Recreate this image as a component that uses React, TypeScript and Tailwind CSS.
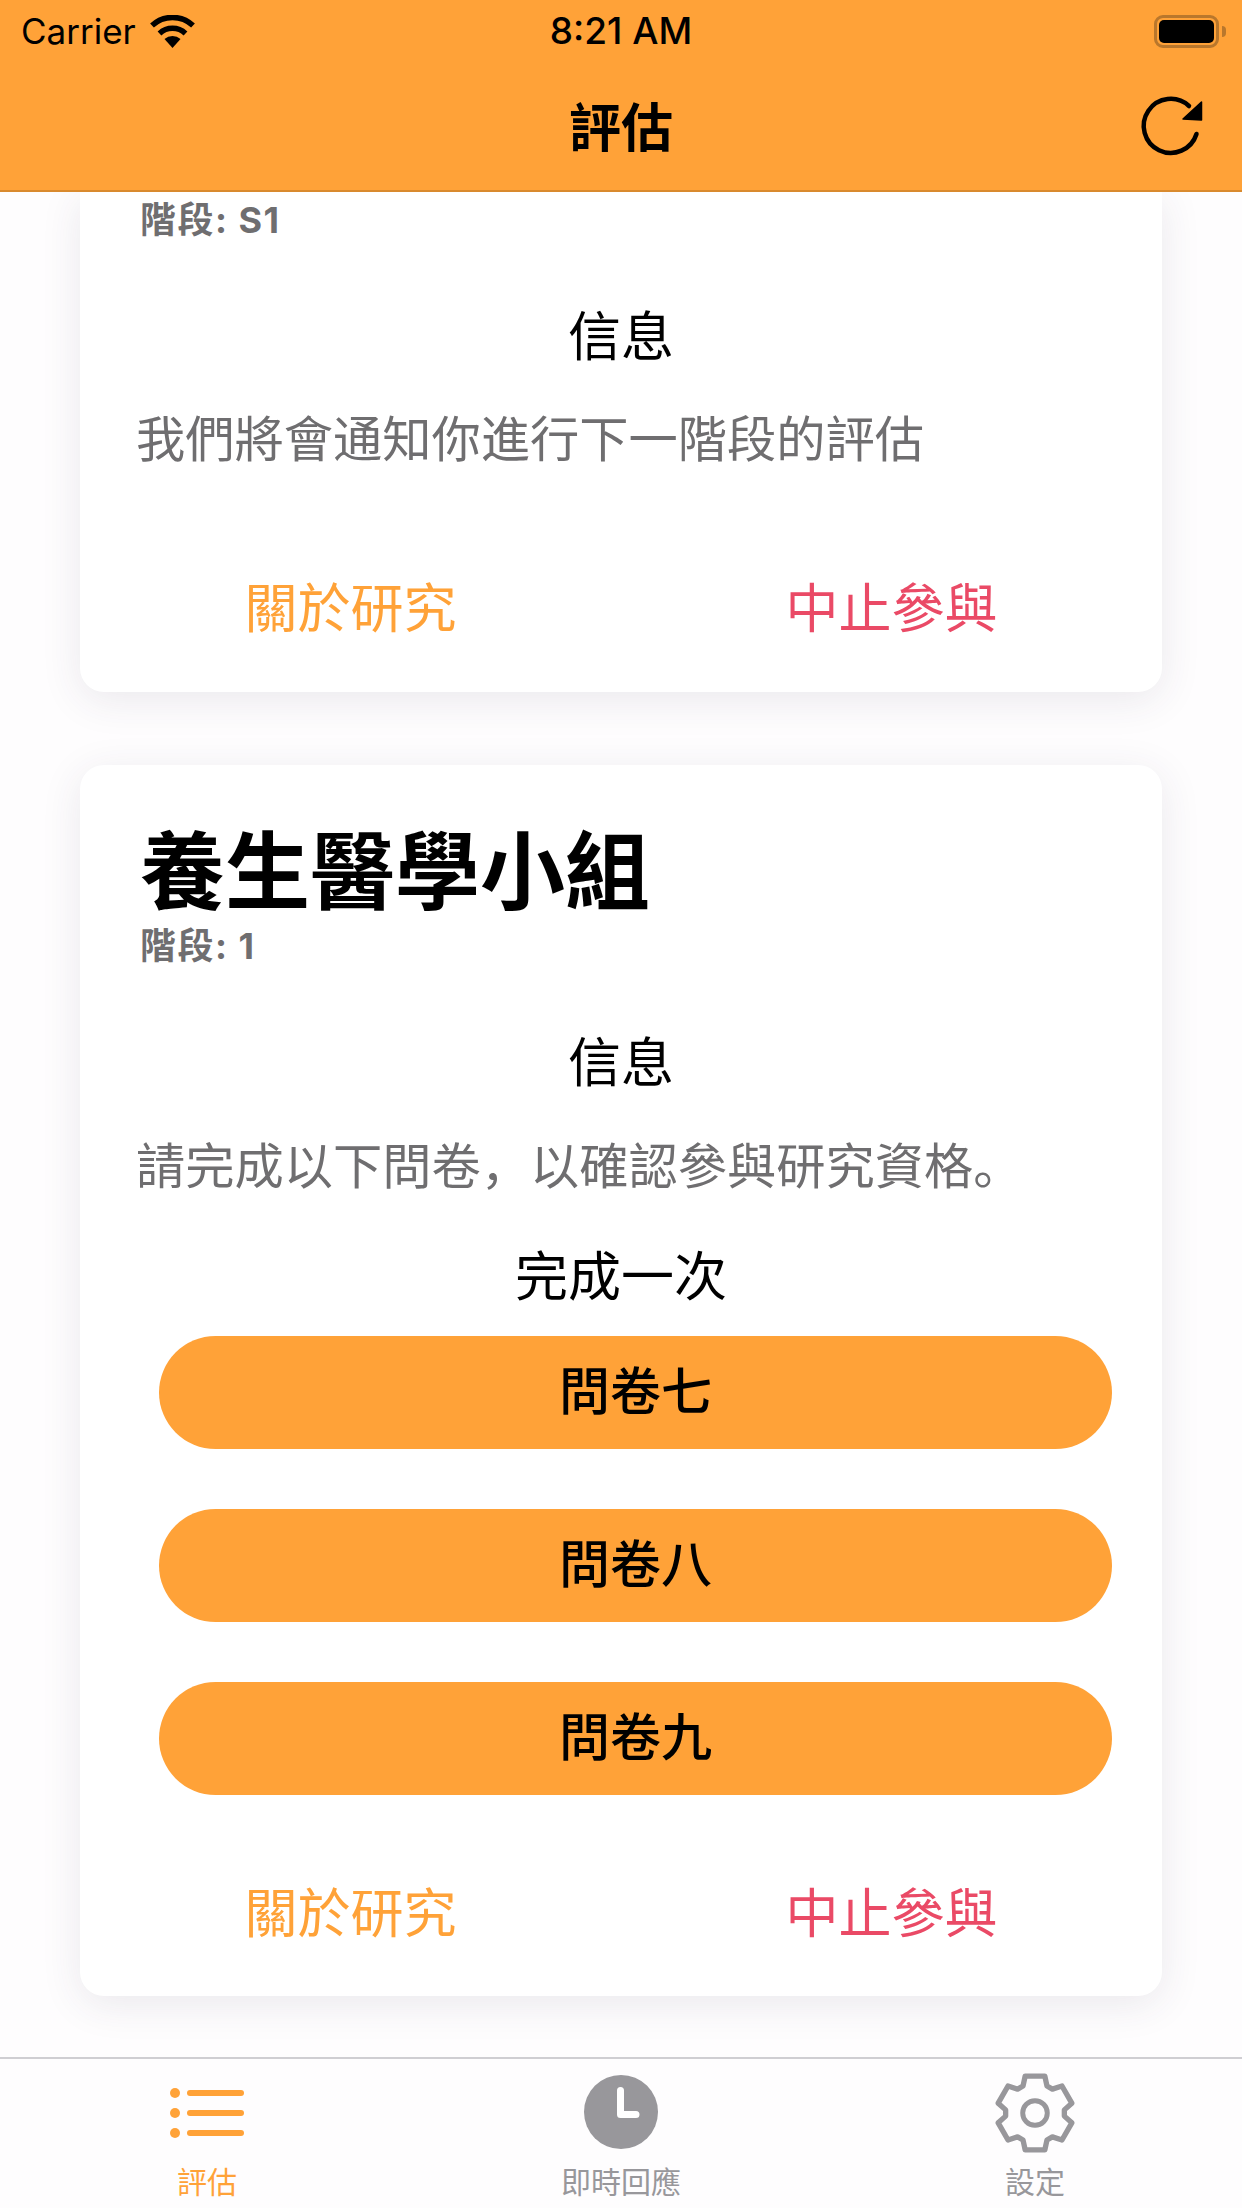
const FONT = "font-['Inter','Noto_Sans_CJK_SC',sans-serif]";

function gearPath() {
  const cx = 50, cy = 50;
  const pts: string[] = [];
  const offs: [number, number][] = [
    [-24, 36], [-15, 46.5], [15, 46.5], [24, 36],
  ];
  for (let i = 0; i < 6; i++) {
    const a = (i * 60 - 90) * Math.PI / 180;
    offs.forEach(([t, r]) => {
      const d = t * Math.PI / 180;
      pts.push(`${(cx + r * Math.cos(a + d)).toFixed(1)} ${(cy + r * Math.sin(a + d)).toFixed(1)}`);
    });
  }
  return "M" + pts.join("L") + "Z";
}

function Wifi() {
  return (
    <svg width="47" height="33" viewBox="0 0 47 33" fill="none" className="ml-[13px]">
      <path d="M23.5 33 L15.5 24 A12 12 0 0 1 31.5 24 Z" fill="#000" />
      <path d="M10.5 18.5 A19 19 0 0 1 36.5 18.5" stroke="#000" strokeWidth="5.5" />
      <path d="M3 10.5 A30 30 0 0 1 44 10.5" stroke="#000" strokeWidth="5.5" />
    </svg>
  );
}

function Battery() {
  return (
    <div className="flex items-center">
      <div className="w-[65px] h-[33px] rounded-[9px] border-[3px] border-[#b9772c] p-[2px]">
        <div className="w-full h-full rounded-[5px] bg-black" />
      </div>
      <div className="w-[4px] h-[11px] ml-[3px] rounded-r-full bg-[#b9772c]" />
    </div>
  );
}

function Refresh() {
  return (
    <svg width="70" height="70" viewBox="0 0 70 70" fill="none" className="absolute left-[1137px] top-[91px]">
      <path d="M59.5 43 A27 27 0 1 1 52 15" stroke="#000" strokeWidth="4.5" strokeLinecap="round" />
      <path d="M64.5 11 L64.5 29 L46 28 Z" fill="#000" stroke="#000" strokeWidth="1.5" strokeLinejoin="round" />
    </svg>
  );
}

function CardFooter() {
  return (
    <div className="grid grid-cols-2 -mx-[60px] text-[53px] leading-[60px]">
      <div className="text-center text-[#ffa238]">關於研究</div>
      <div className="text-center text-[#ea4a66]">中止參與</div>
    </div>
  );
}

function SurveyButton({ label }: { label: string }) {
  return (
    <button className="h-[113px] w-full rounded-full bg-[#ffa238] text-[51px] font-medium text-black">
      {label}
    </button>
  );
}

function TabBar() {
  return (
    <nav className="h-[151px] shrink-0 border-t-2 border-[#cfced2] bg-[#fefdfe] grid grid-cols-3 text-[30px] leading-[36px]">
      <div className="flex flex-col items-center text-[#ffa238]">
        <div className="h-[105px] flex items-center pt-[3px]">
          <svg width="74" height="50" viewBox="0 0 74 50" fill="#ffa238">
            <circle cx="5" cy="5" r="5" />
            <circle cx="5" cy="25" r="5" />
            <circle cx="5" cy="45" r="5" />
            <rect x="17" y="2" width="57" height="6" rx="3" />
            <rect x="17" y="22" width="57" height="6" rx="3" />
            <rect x="17" y="42" width="57" height="6" rx="3" />
          </svg>
        </div>
        <span>評估</span>
      </div>
      <div className="flex flex-col items-center text-[#98979b]">
        <div className="h-[105px] flex items-center">
          <svg width="74" height="74" viewBox="0 0 74 74">
            <circle cx="37" cy="37" r="37" fill="#98979b" />
            <path d="M36.5 15.5 V39.5 H52" fill="none" stroke="#fff" strokeWidth="7" strokeLinecap="round" strokeLinejoin="round" />
          </svg>
        </div>
        <span>即時回應</span>
      </div>
      <div className="flex flex-col items-center text-[#98979b]">
        <div className="h-[105px] flex items-center pt-[2px]">
          <svg width="82" height="82" viewBox="0 0 100 100" fill="none" stroke="#98979b">
            <path d={gearPath()} strokeWidth="6.5" strokeLinejoin="round" />
            <circle cx="50" cy="50" r="15" strokeWidth="6" />
          </svg>
        </div>
        <span>設定</span>
      </div>
    </nav>
  );
}

export default function App() {
  return (
    <div className={`${FONT} relative w-[1242px] h-[2208px] flex flex-col overflow-hidden bg-[#fefdfe]`}>
      <header className="relative z-10 h-[192px] shrink-0 bg-[#ffa238] border-b-2 border-[#d98a2e]">
        <div className="grid grid-cols-3 items-center h-[62px] px-[21px] pr-[16px] text-[36px] text-black">
          <div className="flex items-center">
            <span className="text-[35px]">Carrier</span>
            <Wifi />
          </div>
          <div className="text-center font-medium text-[37px] pr-[5px]">8:21 AM</div>
          <div className="flex justify-end">
            <Battery />
          </div>
        </div>
        <h1 className="text-center text-[52px] leading-[60px] font-bold mt-[37px] text-black">評估</h1>
        <Refresh />
      </header>

      <main className="flex-1 min-h-0 overflow-hidden px-[80px]">
        <section className="bg-white rounded-b-[24px] shadow-[0_8px_40px_rgba(60,50,80,0.10)] h-[500px] px-[60px] flex flex-col">
          <p className="text-[36px] tracking-[1.5px] leading-[40px] font-bold text-[#6f6e70] mt-[8px]">階段: S1</p>
          <p className="text-center text-[53px] leading-[60px] text-black mt-[67px]">信息</p>
          <p className="text-[49.25px] leading-[60px] text-[#6f6e70] mt-[42px] -ml-[4px]">我們將會通知你進行下一階段的評估</p>
          <div className="mt-[110px]"><CardFooter /></div>
        </section>

        <section className="mt-[73px] bg-white rounded-[24px] shadow-[0_8px_40px_rgba(60,50,80,0.10)] h-[1231px] px-[60px] flex flex-col">
          <h2 className="text-[85px] leading-[100px] font-bold text-black mt-[58px]">養生醫學小組</h2>
          <p className="text-[36px] tracking-[1.5px] leading-[40px] font-bold text-[#6f6e70] mt-[3px]">階段: 1</p>
          <p className="text-center text-[53px] leading-[60px] text-black mt-[67px]">信息</p>
          <p className="text-[49.25px] leading-[60px] text-[#6f6e70] mt-[43px] -ml-[4px]">請完成以下問卷，以確認參與研究資格。</p>
          <p className="text-center text-[53px] leading-[60px] text-black mt-[51px]">完成一次</p>
          <div className="flex flex-col gap-[60px] mt-[29px] -mr-[10px] pl-[19px]">
            <SurveyButton label="問卷七" />
            <SurveyButton label="問卷八" />
            <SurveyButton label="問卷九" />
          </div>
          <div className="mt-[89px]"><CardFooter /></div>
        </section>
      </main>

      <TabBar />
    </div>
  );
}
